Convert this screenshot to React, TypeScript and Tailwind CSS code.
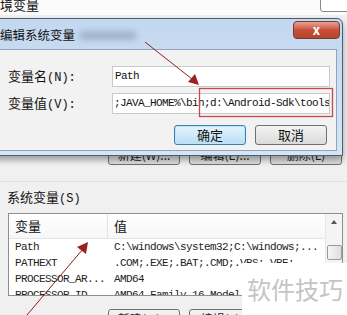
import React from 'react';

const mono = { fontFamily: '"Liberation Mono", "Noto Sans CJK SC", monospace' };

function BackButton({ label }: { label: string }) {
  return (
    <div className="flex h-[20px] w-[72px] items-center justify-center rounded-[3px] border border-[#707070] bg-gradient-to-b from-[#f4f4f4] to-[#dcdcdc] text-[12px] text-[#222]">
      {label}
    </div>
  );
}

function ListRow({ name, value }: { name: string; value: string }) {
  return (
    <div className="flex h-[16px] items-center text-[11px] tracking-[-0.6px] text-[#222]" style={mono}>
      <div className="w-[99px] shrink-0 pl-[6px] whitespace-nowrap overflow-hidden">{name}</div>
      <div className="pl-[6px] whitespace-nowrap overflow-hidden">{value}</div>
    </div>
  );
}

function EditDialog() {
  return (
    <div className="absolute left-[-8px] top-[18px] flex h-[138px] w-[351px] flex-col rounded-t-[6px] border border-[#4b5d71] bg-gradient-to-b from-[#c2d8ef] to-[#d6e5f5] shadow-[0_4px_6px_rgba(0,0,0,0.35)]">
      {/* title bar */}
      <div className="relative flex h-[30px] shrink-0 items-center pl-[7px] pt-[2px]">
        <span className="text-[12.5px] text-[#111]">编辑系统变量</span>
        <div className="ml-[4px] h-[9px] w-[58px] rounded-full bg-[#8fa2b6] opacity-70 blur-[3px]" />
        <div className="absolute right-[2px] top-[2px] flex h-[18px] w-[47px] items-center justify-center rounded-[4px] border border-[#7a3a30] bg-gradient-to-b from-[#e8a291] via-[#c9503a] to-[#b5452f] text-[13px] font-bold text-white">
          x
        </div>
      </div>
      {/* client area */}
      <div className="mx-[5px] flex h-[102px] flex-col border border-[#8fa5bd] bg-[#f2f2f2] pl-[9px] pt-[16px]">
        <div className="flex h-[21px] items-center">
          <div className="w-[104px] text-[13px] text-[#111]">
            变量名<span style={mono} className="text-[12px]">(N):</span>
          </div>
          <div className="flex h-[21px] w-[218px] items-center border border-[#c7c9cf] bg-white pl-[2px] text-[11px] tracking-[-0.6px] text-[#111]" style={mono}>
            Path
          </div>
        </div>
        <div className="mt-[6px] flex h-[21px] items-center">
          <div className="w-[104px] text-[13px] text-[#111]">
            变量值<span style={mono} className="text-[12px]">(V):</span>
          </div>
          <div className="flex h-[21px] w-[218px] items-center overflow-hidden whitespace-nowrap border border-[#c7c9cf] bg-white pl-[1px] text-[11px] tracking-[-0.6px] text-[#111]" style={mono}>
            ;JAVA_HOME%\bin;d:\Android-Sdk\tools
          </div>
        </div>
        <div className="mt-[11px] flex gap-[9px] pl-[166px]">
          <div className="flex h-[20px] w-[72px] items-center justify-center rounded-[3px] border border-[#3c7fb1] bg-gradient-to-b from-[#e6f5fd] to-[#b9def3] text-[13px] text-[#111] shadow-[inset_0_0_0_1px_#bfe3f7]">
            确定
          </div>
          <div className="flex h-[20px] w-[72px] items-center justify-center rounded-[3px] border border-[#707070] bg-gradient-to-b from-[#f4f4f4] to-[#dadada] text-[13px] text-[#111]">
            取消
          </div>
        </div>
      </div>
    </div>
  );
}

export default function App() {
  return (
    <div
      className="relative h-[315px] w-[347px] overflow-hidden bg-[#f0f0f0]"
      style={{ fontFamily: '"Noto Sans CJK SC", "Noto Sans", sans-serif' }}
    >
      {/* background window */}
      <div className="flex h-[15px] items-start justify-between bg-[#fbfbfb]">
        <span className="mt-[-5px] text-[13px] text-[#111]">境变量</span>
        <div className="mt-[-6px] mr-[-4px] h-[18px] w-[31px] rounded-[3px] border border-[#8a8a8a] bg-white" />
      </div>
      <div className="h-[130px]" />
      <div className="flex gap-[9px] pl-[108px]">
        <BackButton label="新建(W)..." />
        <BackButton label="编辑(E)..." />
        <BackButton label="删除(L)" />
      </div>
      <div className="mt-[16px] h-px bg-[#e2e2e2]" />
      <div className="mt-[4px] pl-[7px] text-[13px] leading-[22px] text-[#111]">
        系统变量<span style={mono} className="text-[12px]">(S)</span>
      </div>
      <div className="ml-[8px] mt-[3px] flex h-[83px] w-[335px] overflow-hidden border border-[#8e8f8f] bg-white">
        <div className="flex-1 overflow-hidden">
          <div className="flex h-[25px] border-b border-[#e5e5e5] bg-gradient-to-b from-white to-[#f6f7f8] text-[13px] text-[#111]">
            <div className="flex w-[99px] shrink-0 items-center border-r border-[#e3e3e3] pl-[6px]">变量</div>
            <div className="flex items-center pl-[6px]">值</div>
          </div>
          <ListRow name="Path" value="C:\windows\system32;C:\windows;..." />
          <ListRow name="PATHEXT" value=".COM;.EXE;.BAT;.CMD;.VBS;.VBE;" />
          <ListRow name="PROCESSOR_AR..." value="AMD64" />
          <ListRow name="PROCESSOR_ID" value="AMD64 Family 16 Model" />
        </div>
        <div className="flex w-[17px] shrink-0 flex-col items-center border-l border-[#e8e8e8] bg-[#f4f4f4]">
          <div className="mt-[6px] h-0 w-0 border-x-[3px] border-b-[4px] border-x-transparent border-b-[#555]" />
          <div className="mt-[21px] h-[15px] w-[15px] rounded-[2px] border border-[#9a9a9a] bg-gradient-to-r from-[#f6f6f6] to-[#dedede]" />
        </div>
      </div>
      <div className="mt-[13px] flex gap-[9px] pl-[108px]">
        <BackButton label="新建(W)..." />
        <BackButton label="编辑(E)..." />
        <BackButton label="删除(L)" />
      </div>

      <EditDialog />

      {/* watermark */}
      <div className="absolute left-[242px] top-[263px] flex h-[52px] w-[105px] items-center bg-white pl-[5px] text-[24px] text-[#c4c4c4]">
        软件技巧
      </div>

      {/* annotations */}
      <svg className="absolute left-0 top-0" width="347" height="315" viewBox="0 0 347 315">
        <rect x="199.5" y="88.5" width="133" height="28" fill="none" stroke="#c9474a" strokeWidth="1.3" />
        <line x1="145" y1="42" x2="192" y2="79" stroke="#8b1f1f" strokeWidth="1" />
        <polygon points="199,85 188,82 195,74" fill="#9b2222" />
        <line x1="27" y1="315" x2="83" y2="249" stroke="#8b1f1f" strokeWidth="1" />
        <polygon points="88,242 86,254 77,247" fill="#9b2222" />
      </svg>
    </div>
  );
}
